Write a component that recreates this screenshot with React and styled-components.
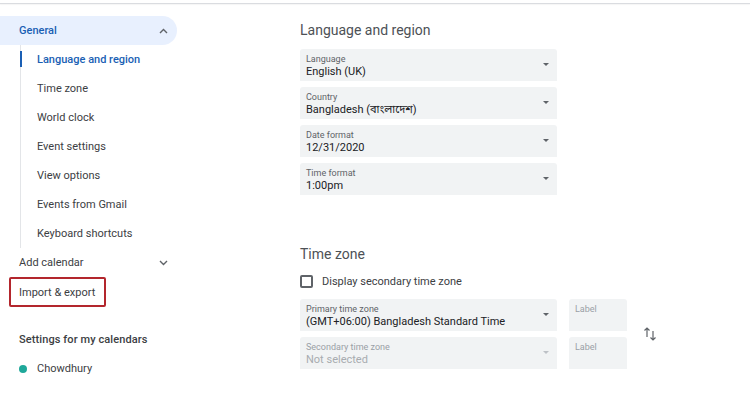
import React from "react";
import styled, { createGlobalStyle } from "styled-components";

const Global = createGlobalStyle`
  html, body { margin: 0; padding: 0; background: #fff; }
  body { font-family: Roboto, "Noto Sans", "Noto Sans Bengali", sans-serif; color: #3c4043; }
  * { box-sizing: border-box; }
`;

const Page = styled.div`
  width: 750px;
  height: 402px;
  overflow: hidden;
  background: #fff;
`;

const TopRule = styled.div`
  height: 4px;
  border-bottom: 1px solid #dadce0;
  box-shadow: 0 1px 1px rgba(0,0,0,0.04);
`;

const Layout = styled.div`
  display: flex;
  gap: 0;
`;

const Sidebar = styled.nav`
  width: 177px;
  padding-top: 12px;
  display: flex;
  flex-direction: column;
  flex-shrink: 0;
`;

const Pill = styled.div`
  height: 29px;
  display: flex;
  align-items: center;
  justify-content: space-between;
  padding: 0 9px 0 19px;
  background: #e8f0fe;
  border-radius: 0 15px 15px 0;
  color: #1a5fb4;
  font-size: 11px;
  font-weight: 500;
`;

const SubList = styled.div`
  position: relative;
  margin-left: 20px;
  border-left: 1px solid #e3e5e8;
  display: flex;
  flex-direction: column;
`;

const SubItem = styled.div`
  position: relative;
  height: 29px;
  display: flex;
  align-items: center;
  padding-left: 16px;
  font-size: 11px;
  color: ${p => (p.$active ? "#1a5fb4" : "#3c4043")};
  font-weight: ${p => (p.$active ? 500 : 400)};
  &::before {
    content: "";
    display: ${p => (p.$active ? "block" : "none")};
    position: absolute;
    left: -1px;
    top: 6px;
    width: 2px;
    height: 16px;
    background: #1a5fb4;
  }
`;

const NavRow = styled.div`
  height: 29px;
  display: flex;
  align-items: center;
  justify-content: space-between;
  padding: 0 9px 0 19px;
  font-size: 11px;
  color: #3c4043;
`;

const Highlight = styled.div`
  margin-left: 9px;
  width: 97px;
  height: 30px;
  display: flex;
  align-items: center;
  padding-left: 8px;
  border: 2px solid #b3262d;
  border-radius: 2px;
  font-size: 11px;
  color: #3c4043;
`;

const SectionLabel = styled.div`
  margin-top: 18px;
  height: 29px;
  display: flex;
  align-items: center;
  padding-left: 19px;
  font-size: 11px;
  font-weight: 500;
  color: #3c4043;
  letter-spacing: 0.1px;
`;

const CalRow = styled.div`
  height: 29px;
  display: flex;
  align-items: center;
  gap: 10px;
  padding-left: 19px;
  font-size: 11px;
  color: #3c4043;
`;

const Dot = styled.span`
  width: 8px;
  height: 8px;
  border-radius: 50%;
  background: ${p => p.$color};
`;

const Main = styled.main`
  margin-left: 123px;
  padding-top: 16px;
  display: flex;
  flex-direction: column;
`;

const Heading = styled.h2`
  margin: 0;
  height: 20px;
  line-height: 20px;
  font-size: 14px;
  font-weight: 400;
  color: #4d5156;
`;

const Fields = styled.div`
  display: flex;
  flex-direction: column;
  gap: 6px;
  margin-top: ${p => p.$mt || 0}px;
`;

const SelectBox = styled.div`
  position: relative;
  width: ${p => p.$w || 257}px;
  height: 32px;
  background: #f1f3f4;
  border-radius: 3px 3px 0 0;
  padding: 5px 6px 0 6px;
  display: flex;
  flex-direction: column;
`;

const FieldLabel = styled.span`
  font-size: 9px;
  line-height: 11px;
  color: ${p => (p.$muted ? "#9aa0a6" : "#5f6368")};
`;

const FieldValue = styled.span`
  font-size: 11px;
  line-height: 14px;
  color: ${p => (p.$muted ? "#a8acb0" : "#202124")};
  white-space: nowrap;
`;

const Caret = styled.span`
  position: absolute;
  right: 8px;
  top: 14px;
  width: 0;
  height: 0;
  border-left: 3px solid transparent;
  border-right: 3px solid transparent;
  border-top: 3px solid ${p => (p.$muted ? "#bdc1c6" : "#5f6368")};
`;

const SecondHeading = styled(Heading)`
  margin-top: 49px;
`;

const CheckRow = styled.label`
  margin-top: 8px;
  height: 18px;
  display: flex;
  align-items: center;
  gap: 9px;
  font-size: 11px;
  color: #3c4043;
`;

const Box = styled.span`
  width: 13px;
  height: 13px;
  border: 2px solid #5f6368;
  border-radius: 2px;
`;

const TzGrid = styled.div`
  margin-top: 9px;
  display: flex;
  align-items: center;
  gap: 12px;
`;

const TzRow = styled.div`
  display: flex;
  gap: 12px;
`;

const SwapWrap = styled.div`
  margin-left: 4px;
  display: flex;
  align-items: center;
`;

function Chevron({ up }) {
  return (
    <svg width="9" height="6" viewBox="0 0 9 6">
      <path
        d={up ? "M1 5 L4.5 1.5 L8 5" : "M1 1 L4.5 4.5 L8 1"}
        fill="none"
        stroke="#5f6368"
        strokeWidth="1.4"
      />
    </svg>
  );
}

function Swap() {
  return (
    <svg width="14" height="16" viewBox="0 0 14 16">
      <g fill="none" stroke="#5f6368" strokeWidth="1.2">
        <path d="M4 11 V2 M1.5 4.5 L4 2 L6.5 4.5" />
        <path d="M10 5 V14 M7.5 11.5 L10 14 L12.5 11.5" />
      </g>
    </svg>
  );
}

function Select({ label, value, muted, w }) {
  return (
    <SelectBox $w={w}>
      <FieldLabel $muted={muted}>{label}</FieldLabel>
      <FieldValue $muted={muted}>{value}</FieldValue>
      <Caret $muted={muted} />
    </SelectBox>
  );
}

function LabelBox() {
  return (
    <SelectBox $w={58}>
      <FieldLabel $muted>Label</FieldLabel>
    </SelectBox>
  );
}

const subItems = [
  "Language and region",
  "Time zone",
  "World clock",
  "Event settings",
  "View options",
  "Events from Gmail",
  "Keyboard shortcuts",
];

export default function App() {
  return (
    <Page>
      <Global />
      <TopRule />
      <Layout>
        <Sidebar>
          <Pill>
            <span>General</span>
            <Chevron up />
          </Pill>
          <SubList>
            {subItems.map((s, i) => (
              <SubItem key={s} $active={i === 0}>{s}</SubItem>
            ))}
          </SubList>
          <NavRow>
            <span>Add calendar</span>
            <Chevron />
          </NavRow>
          <Highlight>Import &amp; export</Highlight>
          <SectionLabel>Settings for my calendars</SectionLabel>
          <CalRow>
            <Dot $color="#1fa89a" />
            <span>Chowdhury</span>
          </CalRow>
        </Sidebar>
        <Main>
          <Heading>Language and region</Heading>
          <Fields $mt={9}>
            <Select label="Language" value="English (UK)" />
            <Select label="Country" value="Bangladesh (বাংলাদেশ)" />
            <Select label="Date format" value="12/31/2020" />
            <Select label="Time format" value="1:00pm" />
          </Fields>
          <SecondHeading>Time zone</SecondHeading>
          <CheckRow>
            <Box />
            <span>Display secondary time zone</span>
          </CheckRow>
          <TzGrid>
            <Fields>
              <TzRow>
                <Select label="Primary time zone" value="(GMT+06:00) Bangladesh Standard Time" />
                <LabelBox />
              </TzRow>
              <TzRow>
                <Select label="Secondary time zone" value="Not selected" muted />
                <LabelBox />
              </TzRow>
            </Fields>
            <SwapWrap>
              <Swap />
            </SwapWrap>
          </TzGrid>
        </Main>
      </Layout>
    </Page>
  );
}
